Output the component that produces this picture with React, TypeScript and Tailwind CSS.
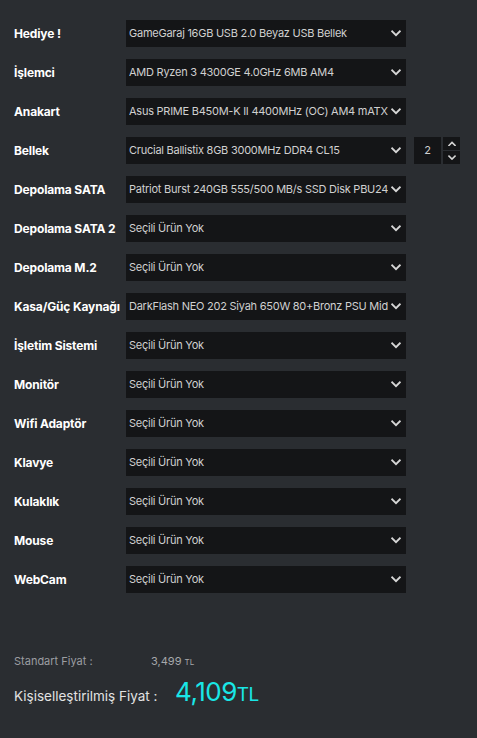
import React from "react";

const rows: { label: string; value: string; qty?: boolean }[] = [
  { label: "Hediye !", value: "GameGaraj 16GB USB 2.0 Beyaz USB Bellek" },
  { label: "İşlemci", value: "AMD Ryzen 3 4300GE 4.0GHz 6MB AM4" },
  { label: "Anakart", value: "Asus PRIME B450M-K II 4400MHz (OC) AM4 mATX" },
  { label: "Bellek", value: "Crucial Ballistix 8GB 3000MHz DDR4 CL15", qty: true },
  { label: "Depolama SATA", value: "Patriot Burst 240GB 555/500 MB/s SSD Disk PBU240GS25SSDR" },
  { label: "Depolama SATA 2", value: "Seçili Ürün Yok" },
  { label: "Depolama M.2", value: "Seçili Ürün Yok" },
  { label: "Kasa/Güç Kaynağı", value: "DarkFlash NEO 202 Siyah 650W 80+Bronz PSU Mid Tower" },
  { label: "İşletim Sistemi", value: "Seçili Ürün Yok" },
  { label: "Monitör", value: "Seçili Ürün Yok" },
  { label: "Wifi Adaptör", value: "Seçili Ürün Yok" },
  { label: "Klavye", value: "Seçili Ürün Yok" },
  { label: "Kulaklık", value: "Seçili Ürün Yok" },
  { label: "Mouse", value: "Seçili Ürün Yok" },
  { label: "WebCam", value: "Seçili Ürün Yok" },
];

function Chevron({ up = false, size = 10 }: { up?: boolean; size?: number }) {
  return (
    <svg width={size} height={size * 0.7} viewBox="0 0 10 7" className="shrink-0">
      <path
        d={up ? "M1.2 5.6 L5 1.8 L8.8 5.6" : "M1.2 1.4 L5 5.2 L8.8 1.4"}
        fill="none"
        stroke="#d6d6d6"
        strokeWidth="1.9"
        strokeLinecap="square"
      />
    </svg>
  );
}

export default function App() {
  return (
    <div
      className="w-[477px] h-[738px] bg-[#2a2d31] overflow-hidden"
      style={{ fontFamily: "Inter, 'Noto Sans', sans-serif" }}
    >
      <div className="pt-[20px] pl-[14px] flex flex-col gap-[12px]">
        {rows.map((r) => (
          <div key={r.label} className="flex items-center h-[27px]">
            <div className="w-[112px] text-[12px] font-bold text-white tracking-[-0.15px] whitespace-nowrap">
              {r.label}
            </div>
            <div className="w-[280px] h-[27px] bg-[#141517] flex items-center pl-[3px] pr-[3px] gap-[1px]">
              <div className="flex-1 overflow-hidden whitespace-nowrap text-[11px] text-[#d0d0d0] tracking-[-0.25px]">
                {r.value}
              </div>
              <div className="w-[14px] flex justify-center">
                <Chevron />
              </div>
            </div>
            {r.qty && (
              <div className="flex items-center ml-[8px] gap-[2px]">
                <div className="w-[27px] h-[27px] bg-[#141517] flex items-center justify-center text-[11px] text-[#d0d0d0]">
                  2
                </div>
                <div className="flex flex-col gap-[1px]">
                  <div className="w-[17px] h-[13px] bg-[#141517] flex items-center justify-center">
                    <Chevron up size={8} />
                  </div>
                  <div className="w-[17px] h-[13px] bg-[#141517] flex items-center justify-center">
                    <Chevron size={8} />
                  </div>
                </div>
              </div>
            )}
          </div>
        ))}
      </div>
      <div className="pl-[14px] mt-[60px]">
        <div className="flex items-baseline h-[14px]">
          <div className="w-[137px] text-[11px] text-[#9b9da1]">Standart Fiyat :</div>
          <div className="text-[11px] text-[#a6a8ab]">
            3,499 <span className="text-[8px]">TL</span>
          </div>
        </div>
        <div className="flex items-baseline mt-[12px]">
          <div className="w-[161px] text-[13.5px] text-[#e2e2e2]">Kişiselleştirilmiş Fiyat :</div>
          <div className="text-[26px] text-[#19e6e6] leading-none tracking-[-0.5px]">
            4,109<span className="text-[19px]">TL</span>
          </div>
        </div>
      </div>
    </div>
  );
}
